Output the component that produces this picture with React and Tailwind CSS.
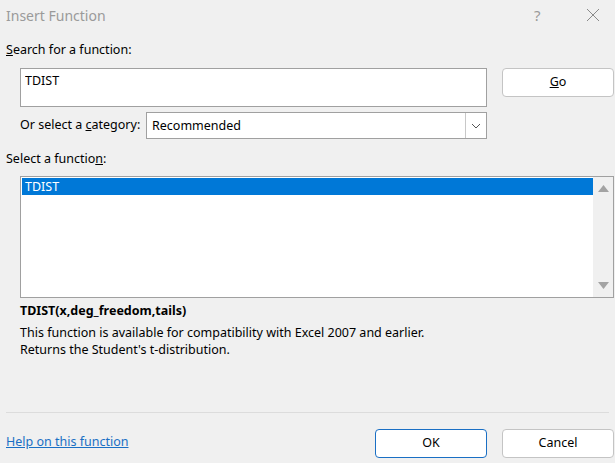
import React, { useState } from 'react';

const FONT = { fontFamily: '"Noto Sans", "Open Sans", "Liberation Sans", sans-serif' };

const CloseIcon = () => (
  <svg width="14" height="14" viewBox="0 0 14 14" fill="none" stroke="#8a8a8a" strokeWidth="1">
    <path d="M1 1 L13 13 M13 1 L1 13" />
  </svg>
);

const ChevronDown = () => (
  <svg width="10" height="6" viewBox="0 0 10 6" fill="none" stroke="#555" strokeWidth="1">
    <path d="M1 1 L5 5 L9 1" />
  </svg>
);

const Triangle = ({ up }) => (
  <svg width="11" height="7" viewBox="0 0 11 7">
    <path d={up ? 'M0 7 L5.5 0 L11 7 Z' : 'M0 0 L5.5 7 L11 0 Z'} fill="#a3a3a3" />
  </svg>
);

const InsertFunction = () => {
  const [query, setQuery] = useState('TDIST');
  const functions = ['TDIST'];
  const [selected, setSelected] = useState('TDIST');

  return (
    <div className="w-[615px] h-[463px] bg-[#f0f0f0] flex flex-col text-[12.5px] text-black select-none" style={FONT}>
      {/* title bar */}
      <div className="h-[30px] flex items-center pl-[6px]">
        <span className="text-[14px] text-[#9a9a9a] flex-1">Insert Function</span>
        <span className="text-[15px] text-[#9a9a9a] w-[12px] mr-[40px]">?</span>
        <span className="mr-[15px] flex items-center"><CloseIcon /></span>
      </div>

      <div className="pl-[6px] mt-[11px] h-[17px] leading-[17px]">
        <span className="underline">S</span>earch for a function:
      </div>

      <div className="flex mt-[10px] pl-[20px]">
        <div className="w-[467px] h-[39px] bg-white border border-[#a0a0a0] px-[4px] pt-[3px]">
          <input
            value={query}
            onChange={(e) => setQuery(e.target.value)}
            className="w-full outline-none bg-transparent text-[12.5px] leading-[16px]"
            style={FONT}
          />
        </div>
        <button className="ml-[15px] w-[112px] h-[29px] bg-white border border-[#c4c4c4] rounded-[4px] text-[12.5px]">
          <span className="underline">G</span>o
        </button>
      </div>

      <div className="flex items-center mt-[5px] pl-[20px]">
        <span className="w-[126px]">Or select a <span className="underline">c</span>ategory:</span>
        <div className="w-[341px] h-[27px] bg-white border border-[#a0a0a0] flex">
          <span className="flex-1 pl-[5px] leading-[25px]">Recommended</span>
          <span className="w-[21px] border-l border-[#c8c8c8] flex items-center justify-center">
            <ChevronDown />
          </span>
        </div>
      </div>

      <div className="pl-[6px] mt-[11px] h-[17px] leading-[17px]">
        Select a functio<span className="underline">n</span>:
      </div>

      <div className="ml-[20px] mt-[9px] w-[594px] h-[122px] bg-white border border-[#a0a0a0] flex">
        <div className="flex-1 pt-[1px] pl-[1px]">
          {functions.map((f) => (
            <div
              key={f}
              onClick={() => setSelected(f)}
              className={`h-[17px] leading-[17px] pl-[3px] ${selected === f ? 'bg-[#0078d7] text-white' : ''}`}
            >
              {f}
            </div>
          ))}
        </div>
        <div className="w-[20px] bg-[#f0f0f0] flex flex-col items-center justify-between py-[8px]">
          <Triangle up />
          <Triangle />
        </div>
      </div>

      <div className="pl-[20px] mt-[4px] font-bold h-[18px] leading-[18px]">TDIST(x,deg_freedom,tails)</div>
      <div className="pl-[20px] mt-[4px] leading-[17px]">
        <div>This function is available for compatibility with Excel 2007 and earlier.</div>
        <div>Returns the Student's t-distribution.</div>
      </div>

      <div className="flex-1" />

      <div className="mx-[6px] border-t border-[#dcdcdc]" />

      <div className="flex items-center pl-[6px] pt-[16px] pb-[5px]">
        <a className="flex-1 text-[#1a6fc4] underline -mt-[3px] cursor-pointer">Help on this function</a>
        <button className="w-[112px] h-[29px] bg-white border border-[#1a6fc4] rounded-[4px] text-[12.5px]">OK</button>
        <button className="ml-[15px] mr-[1px] w-[112px] h-[29px] bg-white border border-[#c4c4c4] rounded-[4px] text-[12.5px]">Cancel</button>
      </div>
    </div>
  );
};

export default function App() {
  return <InsertFunction />;
}
